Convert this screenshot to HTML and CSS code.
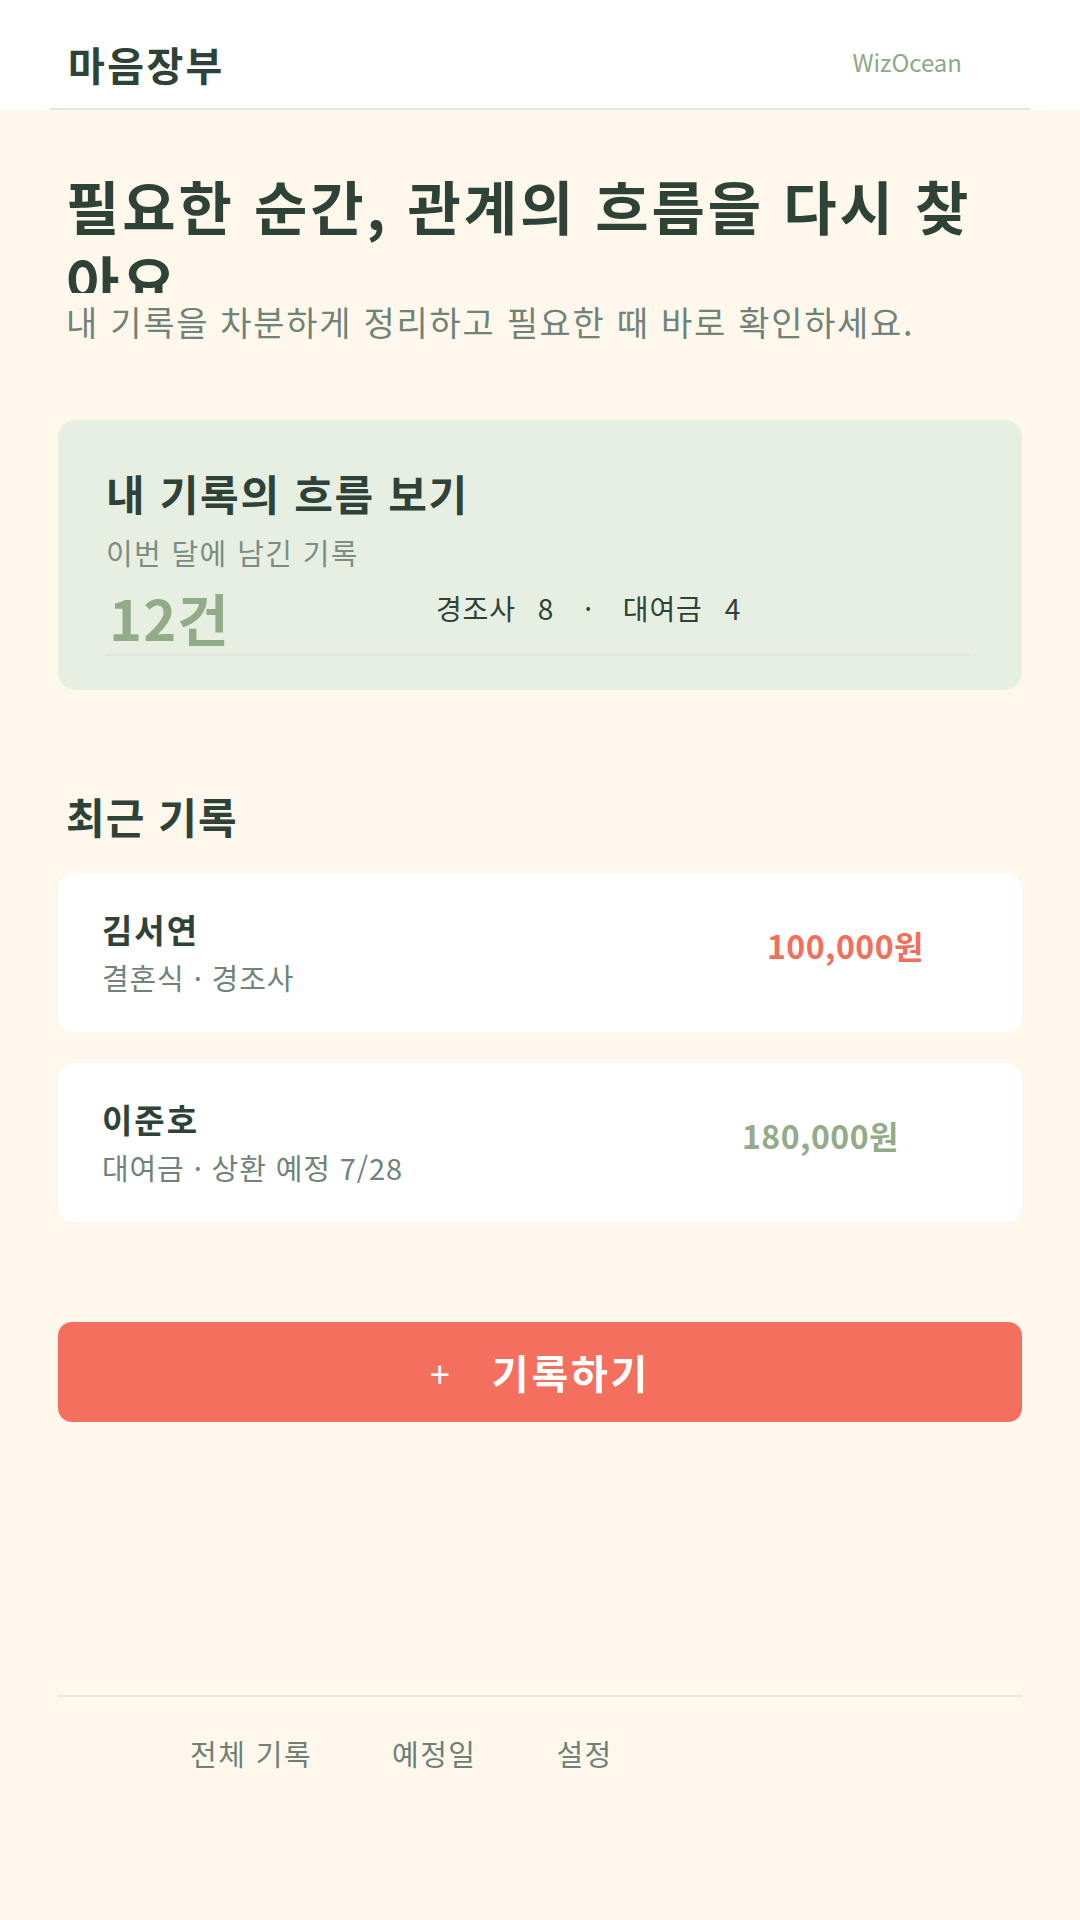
FILE: index.html
```html
<!DOCTYPE html>
<html lang="ko">
<head>
<meta charset="utf-8">
<title>마음장부</title>
<link rel="stylesheet" href="styles.css">
</head>
<body>
<header class="topbar">
  <div class="topbar-inner">
    <div class="logo">마음장부</div>
    <div class="brand">WizOcean</div>
  </div>
</header>
<main class="page">
  <section class="hero">
    <h1 class="hero-title">필요한 순간, 관계의 흐름을 다시 찾아요</h1>
    <p class="hero-sub">내 기록을 차분하게 정리하고 필요한 때 바로 확인하세요.</p>
  </section>

  <section class="summary">
    <h2 class="summary-title">내 기록의 흐름 보기</h2>
    <p class="summary-sub">이번 달에 남긴 기록</p>
    <div class="summary-row">
      <div class="summary-count">12건</div>
      <div class="summary-stats">
        <span class="stat-label">경조사</span><span class="stat-num">8</span>
        <span class="stat-sep">·</span>
        <span class="stat-label">대여금</span><span class="stat-num">4</span>
      </div>
    </div>
    <div class="summary-track"></div>
  </section>

  <section class="recent">
    <h2 class="section-title">최근 기록</h2>
    <div class="record">
      <div class="record-info">
        <div class="record-name">김서연</div>
        <div class="record-meta">결혼식 · 경조사</div>
      </div>
      <div class="record-amount amount-gift">100,000원</div>
    </div>
    <div class="record">
      <div class="record-info">
        <div class="record-name">이준호</div>
        <div class="record-meta">대여금 · 상환 예정 7/28</div>
      </div>
      <div class="record-amount amount-loan">180,000원</div>
    </div>
  </section>

  <button class="add-btn" type="button"><span class="add-plus">+</span><span class="add-label">기록하기</span></button>

  <nav class="bottom-nav">
    <a class="nav-item">전체 기록</a>
    <a class="nav-item">예정일</a>
    <a class="nav-item">설정</a>
  </nav>
</main>
</body>
</html>
```

FILE: styles.css
```css
* {
  box-sizing: border-box;
  margin: 0;
  padding: 0;
}

html, body {
  background: #fef8ec;
}

body {
  width: 1080px;
  min-height: 1920px;
  font-family: "Noto Sans CJK KR", "Noto Sans", sans-serif;
  color: #2f4237;
}

/* header */
.topbar {
  background: #ffffff;
}

.topbar-inner {
  margin: 0 50px;
  height: 110px;
  padding: 20px 18px 0;
  border-bottom: 2px solid #e7e5dd;
  display: flex;
  align-items: center;
  justify-content: space-between;
}

.logo {
  font-size: 40px;
  font-weight: 700;
  line-height: 1.2;
  letter-spacing: 0.06em;
  color: #2f4237;
}

.brand {
  font-size: 24px;
  color: #8fa886;
  margin-right: 50px;
  margin-bottom: 6px;
}

/* page */
.page {
  padding: 0 58px;
}

.hero {
  padding: 0 8px;
}

.hero-title {
  margin-top: 58px;
  font-size: 58px;
  font-weight: 700;
  line-height: 1.3;
  letter-spacing: 0.05em;
  height: 125px;
  overflow: hidden;
  color: #2f4237;
}

.hero-sub {
  margin-top: 5px;
  font-size: 34px;
  line-height: 1.4;
  letter-spacing: 0.05em;
  color: #718279;
}

/* summary card */
.summary {
  margin-top: 74px;
  background: #e7efe3;
  border-radius: 18px;
  padding: 46px 52px 34px 48px;
}

.summary-title {
  font-size: 42px;
  font-weight: 700;
  line-height: 1.3;
  letter-spacing: 0.04em;
}

.summary-sub {
  margin-top: 12px;
  font-size: 29px;
  line-height: 1.4;
  letter-spacing: 0.047em;
  color: #7d8d83;
}

.summary-row {
  margin-top: 10px;
  display: grid;
  grid-template-columns: 330px auto;
  align-items: center;
}

.summary-count {
  font-size: 56px;
  font-weight: 700;
  line-height: 1.2;
  letter-spacing: 0.02em;
  padding-left: 3px;
  color: #93ab88;
}

.summary-stats {
  display: flex;
  align-items: center;
  font-size: 28px;
  letter-spacing: 0.03em;
  color: #2f4237;
  margin-bottom: 16px;
}

.stat-num {
  margin-left: 22px;
}

.stat-sep {
  margin: 0 30px;
}

.summary-track {
  margin-top: 4px;
  height: 2px;
  background: #e3e2da;
}

/* recent */
.recent {
  margin-top: 99px;
}

.section-title {
  padding-left: 8px;
  font-size: 42px;
  font-weight: 700;
  line-height: 1.3;
  letter-spacing: 0.025em;
}

.record {
  margin-top: 29px;
  height: 159px;
  background: #ffffff;
  border-radius: 16px;
  padding: 0 44px;
  display: flex;
  align-items: center;
  justify-content: space-between;
}

.record + .record {
  margin-top: 31px;
}

.record-name {
  font-size: 33px;
  font-weight: 700;
  line-height: 1.35;
  letter-spacing: 0.06em;
}

.record-meta {
  margin-top: 6px;
  font-size: 29px;
  line-height: 1.35;
  letter-spacing: 0.03em;
  color: #718279;
}

.record-amount {
  font-size: 32px;
  font-weight: 700;
  letter-spacing: 0.015em;
  margin-bottom: 14px;
}

.amount-gift {
  color: #f36e5b;
  margin-right: 54px;
}

.amount-loan {
  color: #93ab88;
  margin-right: 79px;
}

/* button */
.add-btn {
  margin-top: 100px;
  width: 100%;
  height: 100px;
  border: none;
  border-radius: 14px;
  background: #f46f5e;
  color: #ffffff;
  font-family: inherit;
  display: flex;
  align-items: center;
  justify-content: center;
}

.add-plus {
  font-size: 36px;
  font-weight: 400;
  margin-right: 42px;
}

.add-label {
  font-size: 40px;
  font-weight: 700;
  letter-spacing: 0.07em;
}

/* bottom nav */
.bottom-nav {
  margin-top: 273px;
  border-top: 2px solid #e7e5dd;
  padding: 36px 0 0 132px;
  display: flex;
  gap: 80px;
}

.nav-item {
  font-size: 29px;
  line-height: 1.4;
  letter-spacing: 0.05em;
  color: #6f8077;
}
```
